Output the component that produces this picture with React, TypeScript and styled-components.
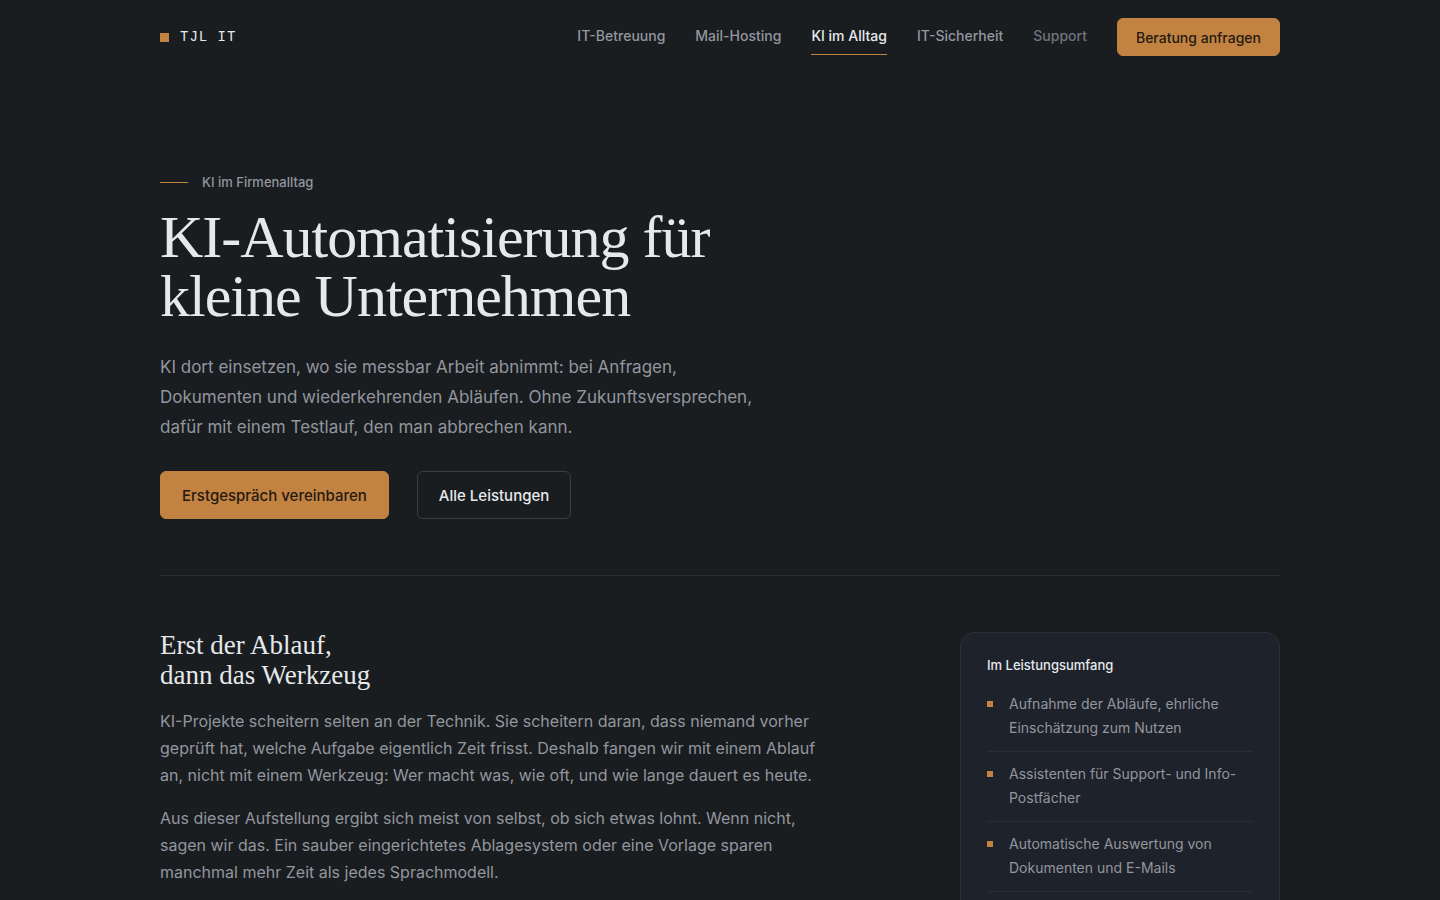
import React from "react";
import styled, { createGlobalStyle } from "styled-components";

const color = {
  bg: "#191d20",
  card: "#1e222a",
  line: "#2a2d33",
  text: "#e6e9ec",
  muted: "#93969e",
  faint: "#70737b",
  accent: "#c28242",
  ink: "#241a10",
};

const GlobalStyle = createGlobalStyle`
  *, *::before, *::after { box-sizing: border-box; }
  body {
    margin: 0;
    background: ${color.bg};
    color: ${color.text};
    font-family: Inter, "Open Sans", sans-serif;
    font-size: 16px;
    -webkit-font-smoothing: antialiased;
  }
  h1, h2, h3, p, ul { margin: 0; padding: 0; }
  a { color: inherit; text-decoration: none; }
`;

const Container = styled.div`
  max-width: 1168px;
  margin: 0 auto;
  padding: 0 24px;
`;

const Header = styled.header`
  display: flex;
  align-items: center;
  justify-content: space-between;
  min-height: 74px;
`;

const Logo = styled.a`
  display: flex;
  align-items: center;
  gap: 11px;
  font: 400 14px/18px "Liberation Mono", monospace;
  letter-spacing: 1px;
  &::before {
    content: "";
    width: 9px;
    height: 9px;
    background: ${color.accent};
  }
`;

const Nav = styled.nav`
  display: flex;
  align-items: center;
  gap: 30px;
`;

const tones = { normal: color.muted, active: color.text, faint: color.faint };

const NavLink = styled.a<{ $tone?: keyof typeof tones }>`
  padding: 8px 0 9px;
  font-size: 14px;
  font-weight: 500;
  line-height: 18px;
  color: ${({ $tone = "normal" }) => tones[$tone]};
  border-bottom: 1px solid ${({ $tone }) => ($tone === "active" ? color.accent : "transparent")};
`;

const Button = styled.button<{ $outline?: boolean; $small?: boolean }>`
  height: ${({ $small }) => ($small ? 38 : 48)}px;
  padding: 0 ${({ $small }) => ($small ? 18 : 21)}px;
  border: 1px solid ${({ $outline }) => ($outline ? "#3a3d45" : color.accent)};
  border-radius: 6px;
  background: ${({ $outline }) => ($outline ? "transparent" : color.accent)};
  color: ${({ $outline }) => ($outline ? color.text : color.ink)};
  font-family: inherit;
  font-size: ${({ $small }) => ($small ? 14 : 15)}px;
  font-weight: 500;
  cursor: pointer;
`;

const Hero = styled.section`
  padding: 98px 0 56px;
  border-bottom: 1px solid ${color.line};
`;

const Eyebrow = styled.p`
  display: flex;
  align-items: center;
  gap: 14px;
  font-size: 13px;
  font-weight: 500;
  line-height: 20px;
  color: ${color.muted};
  &::before {
    content: "";
    width: 28px;
    height: 1px;
    background: ${color.accent};
  }
`;

const Title = styled.h1`
  margin-top: 16px;
  font: 400 60px/59px "Liberation Serif", serif;
  letter-spacing: -1px;
`;

const Lead = styled.p`
  max-width: 600px;
  margin-top: 26px;
  font-size: 17px;
  line-height: 30px;
  color: ${color.muted};
`;

const Actions = styled.div`
  display: flex;
  flex-wrap: wrap;
  gap: 28px;
  margin-top: 29px;
`;

const Columns = styled.div`
  display: grid;
  grid-template-columns: minmax(0, 1fr) 320px;
  gap: 64px;
  align-items: start;
  padding: 56px 0;
`;

const Article = styled.article`
  max-width: 656px;
`;

const Subtitle = styled.h2`
  margin: -2px 0 18px;
  font: 400 27px/30px "Liberation Serif", serif;
`;

const Paragraph = styled.p`
  font-size: 16px;
  line-height: 27px;
  color: ${color.muted};
  & + & { margin-top: 16px; }
`;

const Card = styled.aside`
  padding: 20px 26px 26px;
  border: 1px solid ${color.line};
  border-radius: 14px;
  background: ${color.card};
`;

const CardTitle = styled.h3`
  margin-bottom: 5px;
  font-size: 13px;
  font-weight: 500;
  line-height: 24px;
`;

const Scope = styled.ul`
  list-style: none;
`;

const ScopeItem = styled.li`
  display: flex;
  gap: 16px;
  padding: 10px 0 11px;
  border-bottom: 1px solid ${color.line};
  font-size: 14px;
  line-height: 24px;
  color: ${color.muted};
  &::before {
    content: "";
    flex: none;
    width: 6px;
    height: 6px;
    margin-top: 9px;
    background: ${color.accent};
  }
`;

const scope = [
  "Aufnahme der Abläufe, ehrliche Einschätzung zum Nutzen",
  "Assistenten für Support- und Info-Postfächer",
  "Automatische Auswertung von Dokumenten und E-Mails",
];

export default function App() {
  return (
    <>
      <GlobalStyle />
      <Container>
        <Header>
          <Logo href="#">TJL IT</Logo>
          <Nav>
            <NavLink href="#">IT-Betreuung</NavLink>
            <NavLink href="#">Mail-Hosting</NavLink>
            <NavLink href="#" $tone="active">KI im Alltag</NavLink>
            <NavLink href="#">IT-Sicherheit</NavLink>
            <NavLink href="#" $tone="faint">Support</NavLink>
            <Button $small>Beratung anfragen</Button>
          </Nav>
        </Header>
        <main>
          <Hero>
            <Eyebrow>KI im Firmenalltag</Eyebrow>
            <Title>KI-Automatisierung für<br />kleine Unternehmen</Title>
            <Lead>
              KI dort einsetzen, wo sie messbar Arbeit abnimmt: bei Anfragen,
              Dokumenten und wiederkehrenden Abläufen. Ohne Zukunftsversprechen,
              dafür mit einem Testlauf, den man abbrechen kann.
            </Lead>
            <Actions>
              <Button>Erstgespräch vereinbaren</Button>
              <Button $outline>Alle Leistungen</Button>
            </Actions>
          </Hero>
          <Columns>
            <Article>
              <Subtitle>Erst der Ablauf,<br />dann das Werkzeug</Subtitle>
              <Paragraph>
                KI-Projekte scheitern selten an der Technik. Sie scheitern daran, dass niemand vorher
                geprüft hat, welche Aufgabe eigentlich Zeit frisst. Deshalb fangen wir mit einem Ablauf
                an, nicht mit einem Werkzeug: Wer macht was, wie oft, und wie lange dauert es heute.
              </Paragraph>
              <Paragraph>
                Aus dieser Aufstellung ergibt sich meist von selbst, ob sich etwas lohnt. Wenn nicht,
                sagen wir das. Ein sauber eingerichtetes Ablagesystem oder eine Vorlage sparen
                manchmal mehr Zeit als jedes Sprachmodell.
              </Paragraph>
            </Article>
            <Card>
              <CardTitle>Im Leistungsumfang</CardTitle>
              <Scope>
                {scope.map((item) => <ScopeItem key={item}>{item}</ScopeItem>)}
              </Scope>
            </Card>
          </Columns>
        </main>
      </Container>
    </>
  );
}
